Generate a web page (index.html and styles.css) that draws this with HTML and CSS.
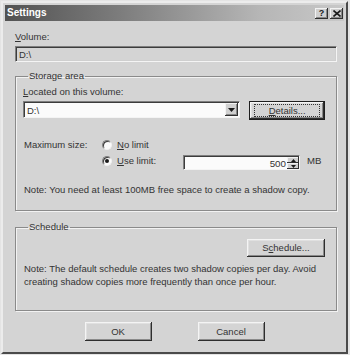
FILE: index.html
```html
<!DOCTYPE html>
<html>
<head>
<meta charset="utf-8">
<link rel="stylesheet" href="styles.css">
</head>
<body>
<div class="window">
  <div class="titlebar">
    <span class="title">Settings</span>
    <div class="tb-btns">
      <span class="tb-btn help">?</span>
      <span class="tb-btn close"><svg width="8" height="7" viewBox="0 0 8 7"><path d="M0.5 0.5 L7.5 6.5 M7.5 0.5 L0.5 6.5" stroke="#1a1a1a" stroke-width="1.6"/></svg></span>
    </div>
  </div>
  <div class="body">
    <div class="label vol-label"><u>V</u>olume:</div>
    <div class="field disabled">D:\</div>

    <fieldset class="group storage">
      <legend>Storage area</legend>
      <div class="label"><u>L</u>ocated on this volume:</div>
      <div class="combo-row">
        <div class="combo">
          <span class="combo-text">D:\</span>
          <span class="drop"><svg width="7" height="4" viewBox="0 0 7 4"><path d="M0 0 H7 L3.5 4 Z" fill="#1a1a1a"/></svg></span>
        </div>
        <button class="btn default details"><span class="focus"><u>D</u>etails...</span></button>
      </div>
      <div class="size-grid">
        <span class="size-label">Maximum size:</span>
        <label class="radio"><span class="dot"></span><span><u>N</u>o limit</span></label>
        <span></span><span></span>
        <span></span>
        <label class="radio"><span class="dot on"></span><span><u>U</u>se limit:</span></label>
        <div class="spin">
          <span class="spin-val">500</span>
          <span class="spin-btns">
            <span class="sb"><svg width="5" height="3" viewBox="0 0 5 3"><path d="M2.5 0 L5 3 H0 Z" fill="#1a1a1a"/></svg></span>
            <span class="sb"><svg width="5" height="3" viewBox="0 0 5 3"><path d="M0 0 H5 L2.5 3 Z" fill="#1a1a1a"/></svg></span>
          </span>
        </div>
        <span class="mb">MB</span>
      </div>
      <p class="note">Note: You need at least 100MB free space to create a shadow copy.</p>
    </fieldset>

    <fieldset class="group schedule">
      <legend>Schedule</legend>
      <div class="sched-row">
        <button class="btn sched">S<u>c</u>hedule...</button>
      </div>
      <p class="note sched-note">Note: The default schedule creates two shadow copies per day. Avoid creating shadow copies more frequently than once per hour.</p>
    </fieldset>

    <div class="actions">
      <button class="btn action">OK</button>
      <button class="btn action">Cancel</button>
    </div>
  </div>
</div>
</body>
</html>
```
FILE: styles.css
```css
html, body {
  margin: 0;
  padding: 0;
}
body {
  background: #e4e4e4;
  font-family: "Liberation Sans", Arial, sans-serif;
  font-size: 9.5px;
  line-height: 12px;
  color: #333;
  width: 350px;
  height: 355px;
  overflow: hidden;
}
u { text-decoration: underline; text-underline-offset: 1px; }

.window {
  margin: 1px 0 0 1px;
  width: 347px;
  height: 353px;
  box-sizing: border-box;
  background: #d4d4d4;
  border: 2px solid;
  border-color: #ececec #4a4a4a #4a4a4a #ececec;
  padding: 2px;
  display: flex;
  flex-direction: column;
}

.titlebar {
  height: 16px;
  flex: none;
  background: linear-gradient(to right, #525252 0%, #7e7e7e 35%, #b6b6b6 75%, #c8c8c8 100%);
  display: flex;
  align-items: center;
  justify-content: space-between;
  padding: 0 1px 0 2px;
}
.title {
  color: #fff;
  font-weight: bold;
  font-size: 10px;
}
.tb-btns {
  display: flex;
  gap: 2px;
}
.tb-btn {
  width: 13px;
  height: 11px;
  box-sizing: border-box;
  background: #d0d0d0;
  box-shadow: inset -1px -1px #303030, inset 1px 1px #f2f2f2, inset -2px -2px #888;
  display: flex;
  align-items: center;
  justify-content: center;
  font-weight: bold;
  font-size: 9px;
  line-height: 9px;
  color: #1a1a1a;
}

.body {
  padding: 0 7px 0 10px;
  flex: 1;
  display: flex;
  flex-direction: column;
}

.vol-label {
  margin-top: 10px;
}

.field {
  margin-top: 3px;
  height: 16px;
  box-sizing: border-box;
  border: 1px solid;
  border-color: #7e7e7e #f4f4f4 #f4f4f4 #7e7e7e;
  box-shadow: inset 1px 1px #3c3c3c, inset -1px -1px #cfcfcf;
  padding: 2px 3px 0;
  line-height: 11px;
}

.group {
  margin: 8px 0 0;
  padding: 4px 11px 14px 7px;
  border: 1px solid #8a8a8a;
  box-shadow: 1px 1px 0 #f2f2f2, inset 1px 1px 0 #f2f2f2;
  min-width: 0;
}
.group legend {
  padding: 0 1px;
  margin-left: 5px;
  line-height: 12px;
}

.combo-row {
  margin-top: 3px;
  display: flex;
  align-items: flex-start;
  gap: 9px;
}
.combo {
  width: 218px;
  height: 17px;
  box-sizing: border-box;
  background: #fbfbfb;
  border: 1px solid;
  border-color: #7e7e7e #f4f4f4 #f4f4f4 #7e7e7e;
  box-shadow: inset 1px 1px #3c3c3c;
  display: flex;
  align-items: stretch;
  padding: 1px 1px 1px 2px;
}
.combo-text {
  flex: 1;
  padding: 2px 0 0 1px;
  line-height: 11px;
}
.drop {
  width: 13px;
  background: #d0d0d0;
  box-shadow: inset -1px -1px #303030, inset 1px 1px #f2f2f2, inset -2px -2px #888;
  display: flex;
  align-items: center;
  justify-content: center;
}

.btn {
  font: inherit;
  color: #333;
  background: #d4d4d4;
  border: none;
  padding: 0;
  margin: 0;
  box-shadow: inset -1px -1px #2e2e2e, inset 1px 1px #f4f4f4, inset -2px -2px #8a8a8a, inset 2px 2px #e0e0e0;
  display: flex;
  align-items: center;
  justify-content: center;
}
.btn.default {
  border: 1px solid #1e1e1e;
}
.details {
  width: 76px;
  height: 19px;
  box-sizing: border-box;
}
.focus {
  border: 1px dotted #333;
  width: 64px;
  height: 11px;
  line-height: 11px;
  text-align: center;
  display: block;
}

.size-grid {
  margin-top: 17px;
  display: grid;
  grid-template-columns: 79px 81px 123px auto;
  grid-auto-rows: 16px;
  align-items: center;
}
.size-label {
  padding-left: 1px;
}
.radio {
  display: flex;
  align-items: center;
  gap: 5px;
}
.dot {
  width: 10px;
  height: 10px;
  box-sizing: border-box;
  border-radius: 50%;
  background: #fafafa;
  border: 1px solid;
  border-color: #7e7e7e #f0f0f0 #f0f0f0 #7e7e7e;
  box-shadow: inset 1px 1px #3a3a3a;
  display: flex;
  align-items: center;
  justify-content: center;
}
.dot.on::after {
  content: "";
  width: 4px;
  height: 4px;
  border-radius: 50%;
  background: #1a1a1a;
}
.spin {
  width: 117px;
  height: 15px;
  box-sizing: border-box;
  background: #fbfbfb;
  border: 1px solid;
  border-color: #7e7e7e #f4f4f4 #f4f4f4 #7e7e7e;
  box-shadow: inset 1px 1px #3c3c3c;
  display: flex;
  align-items: stretch;
  padding: 1px 0 0 0;
  align-self: end;
  margin-bottom: -1px;
}
.spin-val {
  flex: 1;
  text-align: right;
  padding-right: 1px;
  line-height: 13px;
  font-size: 9.8px;
}
.spin-btns {
  width: 12px;
  display: flex;
  flex-direction: column;
}
.sb {
  flex: 1;
  background: #d0d0d0;
  box-shadow: inset -1px -1px #303030, inset 1px 1px #f2f2f2;
  display: flex;
  align-items: center;
  justify-content: center;
}
.mb {
  padding-left: 1px;
  font-size: 9.6px;
}

.note {
  margin: 15px 0 0;
  padding-left: 1px;
}

.schedule {
  margin-top: 10px;
  padding-bottom: 22px;
}
.sched-row {
  margin-top: 2px;
  display: flex;
  justify-content: flex-end;
}
.sched {
  width: 78px;
  height: 18px;
}
.sched-note {
  margin-top: 5px;
  line-height: 13px;
}

.actions {
  margin-top: 11px;
  display: flex;
  justify-content: center;
  gap: 46px;
  margin-left: -3px;
}
.action {
  width: 67px;
  height: 19px;
}
```
